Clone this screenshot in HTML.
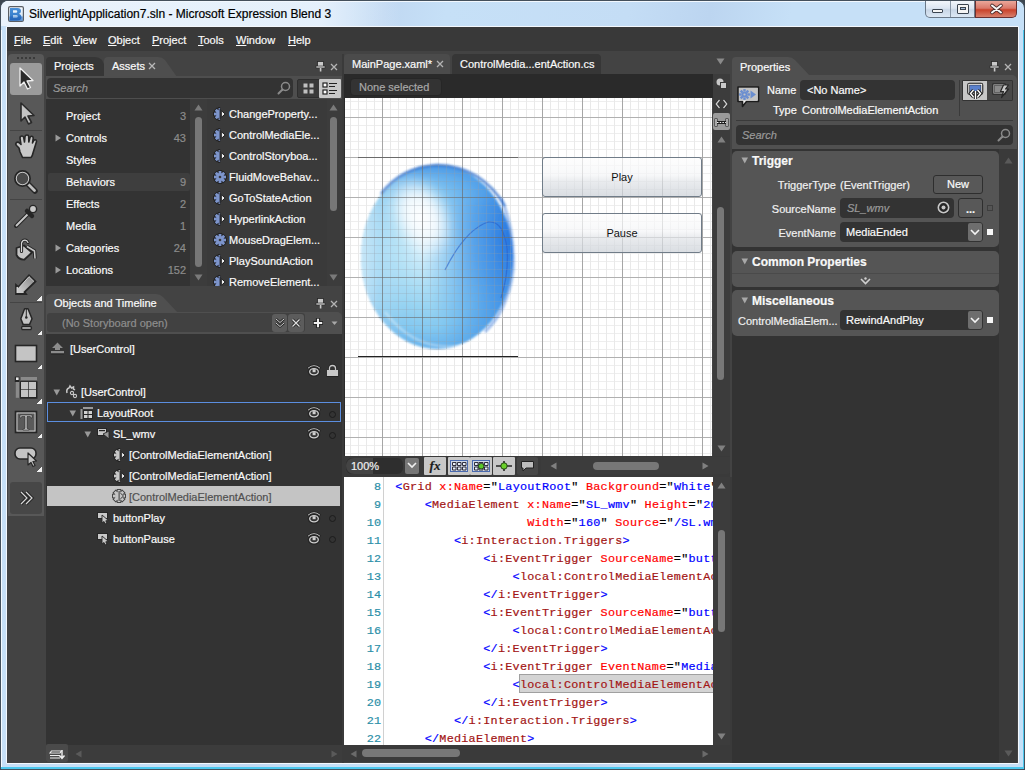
<!DOCTYPE html>
<html><head><meta charset="utf-8">
<style>
*{margin:0;padding:0;box-sizing:border-box}
html,body{width:1025px;height:770px;overflow:hidden;background:#3c4650}
body{position:relative;font-family:"Liberation Sans",sans-serif;font-size:11px;color:#f2f2f2}
.a{position:absolute}
.t{position:absolute;white-space:nowrap;line-height:14px;-webkit-text-stroke:0.2px currentColor}
svg.a{overflow:visible}
.code{position:absolute;white-space:pre;font-family:"Liberation Mono",monospace;font-size:11.8px;letter-spacing:0.25px;line-height:18px;color:#000;-webkit-text-stroke:0.2px}
.code b{font-weight:normal;color:#0000ff}
.code i{font-style:normal;color:#a31515}
.code u{text-decoration:none;color:#ff0000}
.code s{text-decoration:none;color:#0000ff}
</style></head><body>

<div class="a" style="left:0px;top:0px;width:1025px;height:770px;border-radius:8px 8px 2px 2px;background:linear-gradient(100deg,#c8e1f8 0px,#c4def6 300px,#c0d8f2 380px,#c6e0f7 440px,#c4ddf5 620px,#bcd5f0 700px,#c6e0f7 780px);border:1px solid #44505c"></div>
<div class="a" style="left:1px;top:1px;width:420px;height:25px;border-radius:7px 0 0 0;background:linear-gradient(90deg,rgba(236,244,252,0.95) 0px,rgba(232,242,252,0.9) 320px,rgba(232,242,252,0) 400px)"></div>
<div class="a" style="left:6px;top:1px;width:1013px;height:1px;background:#f2f8fe;border-radius:6px 6px 0 0"></div>
<div class="a" style="left:6px;top:26px;width:1013px;height:738px;border:1px solid #f4f8fd;border-radius:1px"></div>
<div class="a" style="left:1px;top:30px;width:1px;height:737px;background:#f4faff"></div>
<div class="a" style="left:1px;top:767px;width:1023px;height:2px;background:#4cc8ee"></div>
<div class="a" style="left:1023px;top:30px;width:1px;height:738px;background:#4cc8ee"></div>
<div class="a" style="left:7px;top:27px;width:1011px;height:736px;background:#434343"></div>
<div class="a" style="left:7px;top:27px;width:1011px;height:24px;background:#393939"></div>
<svg class="a" style="left:8px;top:6px;" width="16" height="16" viewBox="0 0 16 16"><defs><linearGradient id="ig" x1="0" y1="0" x2="0" y2="1"><stop offset="0" stop-color="#f8fbfe"/><stop offset="0.55" stop-color="#dcebf8"/><stop offset="1" stop-color="#9cc8ee"/></linearGradient>
<linearGradient id="ig2" x1="0" y1="0" x2="0" y2="1"><stop offset="0" stop-color="#4a90d8"/><stop offset="0.6" stop-color="#3a80cc"/><stop offset="1" stop-color="#1c5cb0"/></linearGradient></defs>
<rect x="0.6" y="0.6" width="14.8" height="14.8" rx="1.5" fill="url(#ig)" stroke="#5a5e64" stroke-width="1.2"/>
<path d="M2 2 H9.5 Q13 2 13 5 Q13 7.2 11 7.8 Q13.5 8.5 13.5 11 Q13.5 14.5 9 14.5 H2 Z M5 4.3 V6.8 H8 Q9.3 6.8 9.3 5.5 Q9.3 4.3 8 4.3 Z M5 9.2 V12 H8.3 Q9.8 12 9.8 10.6 Q9.8 9.2 8.3 9.2 Z" fill="url(#ig2)" fill-rule="evenodd"/>
<rect x="1.2" y="10.5" width="13.6" height="4.3" fill="#2a6cc0" opacity="0.55"/></svg>
<div class="t" style="left:29px;top:7px;font-size:12px;color:#000">SilverlightApplication7.sln - Microsoft Expression Blend 3</div>
<div class="a" style="left:925px;top:1px;width:50px;height:17px;border:1px solid #6a7888;border-top:none;border-radius:0 0 0 5px;background:linear-gradient(#f2f6fb,#dce6f2 45%,#c8d6e6 55%,#dce8f4)"></div>
<div class="a" style="left:950px;top:1px;width:1px;height:16px;background:#8a98a8"></div>
<div class="a" style="left:975px;top:1px;width:42px;height:17px;border:1px solid #6a3030;border-top:none;border-radius:0 0 5px 0;background:linear-gradient(#eaa79a,#d9796a 45%,#c9432b 55%,#d8806c)"></div>
<div class="a" style="left:932px;top:9px;width:11px;height:4px;background:#f4f4f4;border:1px solid #3a4450;border-radius:1px"></div>
<div class="a" style="left:957px;top:4px;width:12px;height:10px;background:#f4f4f4;border:1px solid #3a4450;border-radius:1px"></div>
<div class="a" style="left:960px;top:7px;width:6px;height:3px;background:#a8c0dc;border:1px solid #3a4450"></div>
<svg class="a" style="left:990px;top:4px;" width="13" height="10" viewBox="0 0 13 10"><path d="M2 1.5 L11 8.5 M11 1.5 L2 8.5" stroke="#4a2a2a" stroke-width="3.6" stroke-linecap="round"/><path d="M2 1.5 L11 8.5 M11 1.5 L2 8.5" stroke="#f8f8f8" stroke-width="2" stroke-linecap="round"/></svg>
<div class="t" style="left:14px;top:33px;font-size:11px;color:#fafafa"><span style="text-decoration:underline">F</span>ile</div>
<div class="t" style="left:43px;top:33px;font-size:11px;color:#fafafa"><span style="text-decoration:underline">E</span>dit</div>
<div class="t" style="left:73px;top:33px;font-size:11px;color:#fafafa"><span style="text-decoration:underline">V</span>iew</div>
<div class="t" style="left:108px;top:33px;font-size:11px;color:#fafafa"><span style="text-decoration:underline">O</span>bject</div>
<div class="t" style="left:152px;top:33px;font-size:11px;color:#fafafa"><span style="text-decoration:underline">P</span>roject</div>
<div class="t" style="left:198px;top:33px;font-size:11px;color:#fafafa"><span style="text-decoration:underline">T</span>ools</div>
<div class="t" style="left:236px;top:33px;font-size:11px;color:#fafafa"><span style="text-decoration:underline">W</span>indow</div>
<div class="t" style="left:288px;top:33px;font-size:11px;color:#fafafa"><span style="text-decoration:underline">H</span>elp</div>
<div class="a" style="left:8px;top:54px;width:36px;height:462px;background:#585858;border-radius:4px 4px 0 0"></div>
<div class="a" style="left:17px;top:57px;width:2px;height:2px;background:#3a3a3a"></div>
<div class="a" style="left:21px;top:57px;width:2px;height:2px;background:#3a3a3a"></div>
<div class="a" style="left:25px;top:57px;width:2px;height:2px;background:#3a3a3a"></div>
<div class="a" style="left:29px;top:57px;width:2px;height:2px;background:#3a3a3a"></div>
<div class="a" style="left:33px;top:57px;width:2px;height:2px;background:#3a3a3a"></div>
<div class="a" style="left:10px;top:63px;width:32px;height:32px;background:#9b9b9b;border-radius:3px"></div>
<div class="a" style="left:10px;top:130px;width:32px;height:1px;background:#444"></div>
<div class="a" style="left:10px;top:199px;width:32px;height:1px;background:#444"></div>
<div class="a" style="left:10px;top:302px;width:32px;height:1px;background:#444"></div>
<svg class="a" style="left:10px;top:63px;" width="32" height="32" viewBox="0 0 32 32"><path d="M10 5 L10 23 L14 19 L17.5 26 L20.5 24.5 L17 18 L23 17.5 Z" fill="#2a2a2a" stroke="#f0f0f0" stroke-width="1.3" stroke-linejoin="round"/><path d="M11 26 l3 0" stroke="none"/></svg>
<svg class="a" style="left:10px;top:97px;" width="32" height="32" viewBox="0 0 32 32"><path d="M11 6 L11 24 L15 20 L18.5 27 L21.5 25.5 L18 19 L24 18.5 Z" fill="#c4c4c4" stroke="#2a2a2a" stroke-width="1.6" stroke-linejoin="round"/></svg>
<svg class="a" style="left:10px;top:133px;" width="32" height="30" viewBox="0 0 32 30"><path d="M9 15 L6.5 12.5 Q5 11 6.5 9.5 Q8 8.5 9.5 10 L11 11.5 L10 5 Q10 3 12 3 Q13.5 3 13.8 5 L14.5 9 L15 3.5 Q15.3 2 17 2 Q18.7 2 18.7 3.5 L18.8 9 L20 4.5 Q20.5 3 22 3.3 Q23.5 3.8 23.2 5.5 L22.5 10 L23.8 7.5 Q24.8 6.3 26 7 Q27 7.8 26.3 9.3 L23 20 Q22.5 23 21 24.5 L12.5 24.5 Q11.5 22 10 19 Z" fill="#c8c8c8" stroke="#262626" stroke-width="1.6" stroke-linejoin="round"/></svg>
<svg class="a" style="left:10px;top:167px;" width="32" height="30" viewBox="0 0 32 30"><path d="M18 17 L25 24" stroke="#262626" stroke-width="5.5" stroke-linecap="round"/><path d="M18.5 17.5 L24.5 23.5" stroke="#c0c0c0" stroke-width="2.8" stroke-linecap="round"/><circle cx="12.5" cy="11.5" r="7" fill="#4a4a4a" stroke="#262626" stroke-width="3"/><circle cx="12.5" cy="11.5" r="6.2" fill="none" stroke="#c8c8c8" stroke-width="1.1"/></svg>
<svg class="a" style="left:10px;top:203px;" width="32" height="28" viewBox="0 0 32 28"><path d="M6 23 L20 9" stroke="#262626" stroke-width="4" stroke-linecap="round"/><path d="M6.5 22.5 L19.5 9.5" stroke="#c8c8c8" stroke-width="1.8" stroke-linecap="round"/><path d="M17 8 L22 13" stroke="#262626" stroke-width="4.5" stroke-linecap="round"/><circle cx="23" cy="6" r="3.6" fill="#c8c8c8" stroke="#262626" stroke-width="1.4"/></svg>
<svg class="a" style="left:10px;top:237px;" width="32" height="28" viewBox="0 0 32 28"><path d="M6.5 11 L14 8.5 L22 15.5 L14.5 22.5 Q9 23 6.5 18 Z" fill="#c4c4c4" stroke="#262626" stroke-width="1.8" stroke-linejoin="round"/><path d="M11.5 14.5 L11.5 6 Q12.5 3 15 3 Q17 3 18 5.5" fill="none" stroke="#262626" stroke-width="3.2" stroke-linecap="round"/><path d="M11.5 14.5 L11.5 6 Q12.5 3.2 15 3.2 Q17 3.2 18 5.5" fill="none" stroke="#d8d8d8" stroke-width="1.2" stroke-linecap="round"/><path d="M17 9.5 L24.5 14 L25 21.5" fill="none" stroke="#262626" stroke-width="3.4" stroke-linejoin="round"/><path d="M17 9.5 L24.5 14 L25 21.5" fill="none" stroke="#c8c8c8" stroke-width="1.5" stroke-linejoin="round"/></svg>
<svg class="a" style="left:10px;top:268px;" width="32" height="30" viewBox="0 0 32 30"><defs><linearGradient id="pg" x1="0" y1="1" x2="1" y2="0"><stop offset="0.2" stop-color="#c8c8c8"/><stop offset="1" stop-color="#808080"/></linearGradient></defs><path d="M6 26 L6 17 L8.3 19 L19 7.2 L25.5 13.5 L14.5 24 L16 26 Z" fill="url(#pg)" stroke="#262626" stroke-width="1.8" stroke-linejoin="miter"/><path d="M7 25 L7 19 L8.5 20.3 L19 8.6 L24 13.5" fill="none" stroke="#e0e0e0" stroke-width="0.8"/></svg>
<div class="a" style="left:37px;top:296px;width:5px;height:5px;background:linear-gradient(135deg,transparent 50%,#f0f0f0 50%)"></div>
<svg class="a" style="left:10px;top:303px;" width="32" height="30" viewBox="0 0 32 30"><path d="M14.6 5.8 L18 5.8 L22 15.8 L19.5 21.6 L13.2 21.6 L10.8 15.8 Z" fill="#c4c4c4" stroke="#262626" stroke-width="1.5" stroke-linejoin="round"/><path d="M16.3 6 V14" stroke="#262626" stroke-width="1"/><circle cx="16.3" cy="14.5" r="1.3" fill="#262626"/><path d="M12.2 23.5 H20.8 L21.5 25 L20.8 26.5 H12.2 L11.5 25 Z" fill="#c4c4c4" stroke="#262626" stroke-width="1.3"/></svg>
<div class="a" style="left:37px;top:330px;width:5px;height:5px;background:linear-gradient(135deg,transparent 50%,#f0f0f0 50%)"></div>
<svg class="a" style="left:10px;top:340px;" width="32" height="28" viewBox="0 0 32 28"><rect x="5.5" y="5.5" width="21" height="16" fill="#c4c4c4" stroke="#262626" stroke-width="1.6"/></svg>
<div class="a" style="left:37px;top:364px;width:5px;height:5px;background:linear-gradient(135deg,transparent 50%,#f0f0f0 50%)"></div>
<svg class="a" style="left:10px;top:372px;" width="32" height="30" viewBox="0 0 32 30"><rect x="5.8" y="10" width="3.2" height="15.8" fill="#8a8a8a"/><rect x="10.8" y="5" width="16.2" height="3.1" fill="#8a8a8a"/><rect x="4.8" y="4.6" width="4.6" height="5.4" fill="#262626"/><rect x="6" y="5.4" width="2.6" height="2.6" fill="#e8e8e8"/><rect x="10" y="9.2" width="17.5" height="17.5" fill="#262626"/><rect x="11" y="10" width="7.3" height="7.3" fill="#c4c4c4"/><rect x="19" y="10" width="7" height="7.3" fill="#c4c4c4"/><rect x="11" y="17.9" width="7.3" height="7.1" fill="#c4c4c4"/><rect x="19" y="17.9" width="7" height="7.1" fill="#c4c4c4"/></svg>
<div class="a" style="left:37px;top:399px;width:5px;height:5px;background:linear-gradient(135deg,transparent 50%,#f0f0f0 50%)"></div>
<svg class="a" style="left:10px;top:406px;" width="32" height="30" viewBox="0 0 32 30"><rect x="5.5" y="5.5" width="21" height="21" fill="#5a5a5a" stroke="#262626" stroke-width="1.6"/><rect x="7" y="7" width="18" height="18" fill="none" stroke="#c8c8c8" stroke-width="1"/><path d="M10 9 L22 9 L22 12 L21 12 L20.3 10.5 L17 10.5 L17 22.5 L19 23 L19 24 L13 24 L13 23 L15 22.5 L15 10.5 L11.7 10.5 L11 12 L10 12 Z" fill="#c8c8c8" stroke="#262626" stroke-width="0.6"/></svg>
<div class="a" style="left:37px;top:433px;width:5px;height:5px;background:linear-gradient(135deg,transparent 50%,#f0f0f0 50%)"></div>
<svg class="a" style="left:10px;top:443px;" width="32" height="30" viewBox="0 0 32 30"><rect x="5" y="5" width="21" height="11" rx="5" fill="#c4c4c4" stroke="#262626" stroke-width="1.6"/><path d="M18 10 L18 22 L21 19.5 L23 23.5 L25 22.5 L23 18.5 L26.5 18 Z" fill="#c4c4c4" stroke="#262626" stroke-width="1.2" stroke-linejoin="round"/></svg>
<div class="a" style="left:37px;top:467px;width:5px;height:5px;background:linear-gradient(135deg,transparent 50%,#f0f0f0 50%)"></div>
<div class="a" style="left:10px;top:482px;width:32px;height:32px;background:#474747;border-radius:3px"></div>
<svg class="a" style="left:10px;top:482px;" width="32" height="32" viewBox="0 0 32 32"><path d="M11 10 L17 16 L11 22 M16 10 L22 16 L16 22" fill="none" stroke="#262626" stroke-width="3.2"/><path d="M11 10 L17 16 L11 22 M16 10 L22 16 L16 22" fill="none" stroke="#d8d8d8" stroke-width="1.2"/></svg>
<svg class="a" style="left:46px;top:57px;" width="140" height="20" viewBox="0 0 140 20"><path d="M0 20 L0 4 Q0 0 4 0 L49 0 Q53 0 56 3 L64 20 Z" fill="#363636"/><path d="M58 20 L58 4 Q58 0 62 0 L112 0 Q116 0 119 3 L131 20 Z" fill="#4e4e4e"/></svg>
<div class="t" style="left:54px;top:59px;font-size:11px;color:#fafafa">Projects</div>
<div class="t" style="left:112px;top:59px;font-size:11px;color:#fafafa">Assets</div>
<svg class="a" style="left:148px;top:62px;" width="8" height="8" viewBox="0 0 8 8"><path d="M1 1 L7 7 M7 1 L1 7" stroke="#b8b8b8" stroke-width="1.3"/></svg>
<svg class="a" style="left:316px;top:61px;" width="10" height="11" viewBox="0 0 10 11"><rect x="1.5" y="0.5" width="6" height="5" fill="#c8c8c8" stroke="#262626" stroke-width="0.8"/><rect x="0" y="5" width="9" height="2" fill="#c8c8c8" stroke="#262626" stroke-width="0.6"/><rect x="3.8" y="7" width="1.6" height="3.5" fill="#c8c8c8"/></svg>
<svg class="a" style="left:330px;top:63px;" width="8" height="8" viewBox="0 0 8 8"><path d="M1 1 L7 7 M7 1 L1 7" stroke="#b4b4b4" stroke-width="1.3"/></svg>
<div class="a" style="left:46px;top:76px;width:296px;height:210px;background:#4e4e4e"></div>
<div class="a" style="left:47px;top:78px;width:246px;height:20px;background:#333;border-radius:4px"></div>
<div class="t" style="left:53px;top:81px;font-size:11px;font-style:italic;color:#9a9a9a">Search</div>
<svg class="a" style="left:277px;top:81px;" width="14" height="14" viewBox="0 0 14 14"><circle cx="8.5" cy="5.5" r="4" fill="none" stroke="#8a8a8a" stroke-width="1.5"/><path d="M5.5 8.5 L1.5 12.5" stroke="#8a8a8a" stroke-width="2" stroke-linecap="round"/></svg>
<div class="a" style="left:297px;top:79px;width:44px;height:19px;background:#3a3a3a;border:1px solid #2e2e2e;border-radius:2px"></div>
<div class="a" style="left:319px;top:79px;width:22px;height:19px;background:#c8c8c8;border-radius:1px"></div>
<svg class="a" style="left:303px;top:83px;" width="12" height="12" viewBox="0 0 12 12"><rect x="0.5" y="0.5" width="4" height="4" fill="#c0c0c0"/><rect x="6.5" y="0.5" width="4" height="4" fill="#c0c0c0"/><rect x="0.5" y="6.5" width="4" height="4" fill="#c0c0c0"/><rect x="6.5" y="6.5" width="4" height="4" fill="#c0c0c0"/></svg>
<svg class="a" style="left:322px;top:82px;" width="18" height="14" viewBox="0 0 18 14"><rect x="1" y="1" width="4" height="4" fill="#fff" stroke="#222" stroke-width="1.2"/><rect x="1" y="8" width="4" height="4" fill="#fff" stroke="#222" stroke-width="1.2"/><path d="M7 1.5 H15 M7 4.5 H13 M7 8.5 H15 M7 11.5 H13" stroke="#222" stroke-width="1.2"/></svg>
<div class="a" style="left:46px;top:99px;width:144px;height:187px;background:#333"></div>
<div class="a" style="left:48px;top:173px;width:142px;height:18px;background:#3e3e3e;border-radius:2px"></div>
<div class="t" style="left:66px;top:109px;font-size:11px;color:#fafafa">Project</div>
<div class="t" style="right:839px;top:109px;font-size:11px;color:#8c8c8c">3</div>
<svg class="a" style="left:55px;top:134px;" width="7" height="8" viewBox="0 0 7 8"><path d="M0.5 0.5 L6 4 L0.5 7.5 Z" fill="#9a9a9a"/></svg>
<div class="t" style="left:66px;top:131px;font-size:11px;color:#fafafa">Controls</div>
<div class="t" style="right:839px;top:131px;font-size:11px;color:#8c8c8c">43</div>
<div class="t" style="left:66px;top:153px;font-size:11px;color:#fafafa">Styles</div>
<div class="t" style="left:66px;top:175px;font-size:11px;color:#fafafa">Behaviors</div>
<div class="t" style="right:839px;top:175px;font-size:11px;color:#8c8c8c">9</div>
<div class="t" style="left:66px;top:197px;font-size:11px;color:#fafafa">Effects</div>
<div class="t" style="right:839px;top:197px;font-size:11px;color:#8c8c8c">2</div>
<div class="t" style="left:66px;top:219px;font-size:11px;color:#fafafa">Media</div>
<div class="t" style="right:839px;top:219px;font-size:11px;color:#8c8c8c">1</div>
<svg class="a" style="left:55px;top:244px;" width="7" height="8" viewBox="0 0 7 8"><path d="M0.5 0.5 L6 4 L0.5 7.5 Z" fill="#9a9a9a"/></svg>
<div class="t" style="left:66px;top:241px;font-size:11px;color:#fafafa">Categories</div>
<div class="t" style="right:839px;top:241px;font-size:11px;color:#8c8c8c">24</div>
<svg class="a" style="left:55px;top:266px;" width="7" height="8" viewBox="0 0 7 8"><path d="M0.5 0.5 L6 4 L0.5 7.5 Z" fill="#9a9a9a"/></svg>
<div class="t" style="left:66px;top:263px;font-size:11px;color:#fafafa">Locations</div>
<div class="t" style="right:839px;top:263px;font-size:11px;color:#8c8c8c">152</div>
<div class="a" style="left:190px;top:99px;width:17px;height:187px;background:#3c3c3c"></div>
<svg class="a" style="left:194px;top:104px;" width="9" height="7" viewBox="0 0 9 7"><path d="M0.5 6.5 L4.5 0.5 L8.5 6.5 Z" fill="#7a7a7a"/></svg>
<svg class="a" style="left:194px;top:274px;" width="9" height="7" viewBox="0 0 9 7"><path d="M0.5 0.5 L4.5 6.5 L8.5 0.5 Z" fill="#7a7a7a"/></svg>
<div class="a" style="left:195px;top:117px;width:7px;height:150px;background:#777;border-radius:4px"></div>
<div class="a" style="left:207px;top:99px;width:120px;height:187px;background:#3a3a3a"></div>
<div class="a" style="left:327px;top:99px;width:15px;height:187px;background:#3c3c3c"></div>
<svg class="a" style="left:329px;top:104px;" width="9" height="7" viewBox="0 0 9 7"><path d="M0.5 6.5 L4.5 0.5 L8.5 6.5 Z" fill="#7a7a7a"/></svg>
<svg class="a" style="left:329px;top:274px;" width="9" height="7" viewBox="0 0 9 7"><path d="M0.5 0.5 L4.5 6.5 L8.5 0.5 Z" fill="#7a7a7a"/></svg>
<div class="a" style="left:330px;top:117px;width:7px;height:94px;background:#777;border-radius:4px"></div>
<div class="a" style="left:207px;top:99px;width:120px;height:187px;overflow:hidden">
<svg class="a" style="left:6px;top:8px" width="14" height="14"><defs><clipPath id="hg"><rect x="0" y="0" width="7.2" height="14"/></clipPath></defs><g clip-path="url(#hg)"><g fill="#1e1e1e" stroke="#1e1e1e" stroke-width="1.6"><circle cx="7" cy="7" r="3.9"/><rect x="10.20" y="5.60" width="2.8" height="2.8" transform="rotate(0 11.60 7.00)"/><rect x="8.85" y="8.85" width="2.8" height="2.8" transform="rotate(45 10.25 10.25)"/><rect x="5.60" y="10.20" width="2.8" height="2.8" transform="rotate(90 7.00 11.60)"/><rect x="2.35" y="8.85" width="2.8" height="2.8" transform="rotate(135 3.75 10.25)"/><rect x="1.00" y="5.60" width="2.8" height="2.8" transform="rotate(180 2.40 7.00)"/><rect x="2.35" y="2.35" width="2.8" height="2.8" transform="rotate(225 3.75 3.75)"/><rect x="5.60" y="1.00" width="2.8" height="2.8" transform="rotate(270 7.00 2.40)"/><rect x="8.85" y="2.35" width="2.8" height="2.8" transform="rotate(315 10.25 3.75)"/></g><g fill="#7d95cc"><circle cx="7" cy="7" r="3.9"/><rect x="10.20" y="5.60" width="2.8" height="2.8" transform="rotate(0 11.60 7.00)"/><rect x="8.85" y="8.85" width="2.8" height="2.8" transform="rotate(45 10.25 10.25)"/><rect x="5.60" y="10.20" width="2.8" height="2.8" transform="rotate(90 7.00 11.60)"/><rect x="2.35" y="8.85" width="2.8" height="2.8" transform="rotate(135 3.75 10.25)"/><rect x="1.00" y="5.60" width="2.8" height="2.8" transform="rotate(180 2.40 7.00)"/><rect x="2.35" y="2.35" width="2.8" height="2.8" transform="rotate(225 3.75 3.75)"/><rect x="5.60" y="1.00" width="2.8" height="2.8" transform="rotate(270 7.00 2.40)"/><rect x="8.85" y="2.35" width="2.8" height="2.8" transform="rotate(315 10.25 3.75)"/></g></g><rect x="6.6" y="1.5" width="1" height="11" fill="#1e1e1e"/><path d="M8.3 3.6 L12.2 7 L8.3 10.4 Z" fill="#f4f4f4" stroke="#1e1e1e" stroke-width="1"/></svg>
<div class="t" style="left:22px;top:8px;font-size:11px;color:#fafafa">ChangeProperty...</div>
<svg class="a" style="left:6px;top:29px" width="14" height="14"><defs><clipPath id="hg"><rect x="0" y="0" width="7.2" height="14"/></clipPath></defs><g clip-path="url(#hg)"><g fill="#1e1e1e" stroke="#1e1e1e" stroke-width="1.6"><circle cx="7" cy="7" r="3.9"/><rect x="10.20" y="5.60" width="2.8" height="2.8" transform="rotate(0 11.60 7.00)"/><rect x="8.85" y="8.85" width="2.8" height="2.8" transform="rotate(45 10.25 10.25)"/><rect x="5.60" y="10.20" width="2.8" height="2.8" transform="rotate(90 7.00 11.60)"/><rect x="2.35" y="8.85" width="2.8" height="2.8" transform="rotate(135 3.75 10.25)"/><rect x="1.00" y="5.60" width="2.8" height="2.8" transform="rotate(180 2.40 7.00)"/><rect x="2.35" y="2.35" width="2.8" height="2.8" transform="rotate(225 3.75 3.75)"/><rect x="5.60" y="1.00" width="2.8" height="2.8" transform="rotate(270 7.00 2.40)"/><rect x="8.85" y="2.35" width="2.8" height="2.8" transform="rotate(315 10.25 3.75)"/></g><g fill="#7d95cc"><circle cx="7" cy="7" r="3.9"/><rect x="10.20" y="5.60" width="2.8" height="2.8" transform="rotate(0 11.60 7.00)"/><rect x="8.85" y="8.85" width="2.8" height="2.8" transform="rotate(45 10.25 10.25)"/><rect x="5.60" y="10.20" width="2.8" height="2.8" transform="rotate(90 7.00 11.60)"/><rect x="2.35" y="8.85" width="2.8" height="2.8" transform="rotate(135 3.75 10.25)"/><rect x="1.00" y="5.60" width="2.8" height="2.8" transform="rotate(180 2.40 7.00)"/><rect x="2.35" y="2.35" width="2.8" height="2.8" transform="rotate(225 3.75 3.75)"/><rect x="5.60" y="1.00" width="2.8" height="2.8" transform="rotate(270 7.00 2.40)"/><rect x="8.85" y="2.35" width="2.8" height="2.8" transform="rotate(315 10.25 3.75)"/></g></g><rect x="6.6" y="1.5" width="1" height="11" fill="#1e1e1e"/><path d="M8.3 3.6 L12.2 7 L8.3 10.4 Z" fill="#f4f4f4" stroke="#1e1e1e" stroke-width="1"/></svg>
<div class="t" style="left:22px;top:29px;font-size:11px;color:#fafafa">ControlMediaEle...</div>
<svg class="a" style="left:6px;top:50px" width="14" height="14"><defs><clipPath id="hg"><rect x="0" y="0" width="7.2" height="14"/></clipPath></defs><g clip-path="url(#hg)"><g fill="#1e1e1e" stroke="#1e1e1e" stroke-width="1.6"><circle cx="7" cy="7" r="3.9"/><rect x="10.20" y="5.60" width="2.8" height="2.8" transform="rotate(0 11.60 7.00)"/><rect x="8.85" y="8.85" width="2.8" height="2.8" transform="rotate(45 10.25 10.25)"/><rect x="5.60" y="10.20" width="2.8" height="2.8" transform="rotate(90 7.00 11.60)"/><rect x="2.35" y="8.85" width="2.8" height="2.8" transform="rotate(135 3.75 10.25)"/><rect x="1.00" y="5.60" width="2.8" height="2.8" transform="rotate(180 2.40 7.00)"/><rect x="2.35" y="2.35" width="2.8" height="2.8" transform="rotate(225 3.75 3.75)"/><rect x="5.60" y="1.00" width="2.8" height="2.8" transform="rotate(270 7.00 2.40)"/><rect x="8.85" y="2.35" width="2.8" height="2.8" transform="rotate(315 10.25 3.75)"/></g><g fill="#7d95cc"><circle cx="7" cy="7" r="3.9"/><rect x="10.20" y="5.60" width="2.8" height="2.8" transform="rotate(0 11.60 7.00)"/><rect x="8.85" y="8.85" width="2.8" height="2.8" transform="rotate(45 10.25 10.25)"/><rect x="5.60" y="10.20" width="2.8" height="2.8" transform="rotate(90 7.00 11.60)"/><rect x="2.35" y="8.85" width="2.8" height="2.8" transform="rotate(135 3.75 10.25)"/><rect x="1.00" y="5.60" width="2.8" height="2.8" transform="rotate(180 2.40 7.00)"/><rect x="2.35" y="2.35" width="2.8" height="2.8" transform="rotate(225 3.75 3.75)"/><rect x="5.60" y="1.00" width="2.8" height="2.8" transform="rotate(270 7.00 2.40)"/><rect x="8.85" y="2.35" width="2.8" height="2.8" transform="rotate(315 10.25 3.75)"/></g></g><rect x="6.6" y="1.5" width="1" height="11" fill="#1e1e1e"/><path d="M8.3 3.6 L12.2 7 L8.3 10.4 Z" fill="#f4f4f4" stroke="#1e1e1e" stroke-width="1"/></svg>
<div class="t" style="left:22px;top:50px;font-size:11px;color:#fafafa">ControlStoryboa...</div>
<svg class="a" style="left:6px;top:71px" width="14" height="14"><g fill="#1e1e1e" stroke="#1e1e1e" stroke-width="1.6"><circle cx="7" cy="7" r="3.9"/><rect x="10.20" y="5.60" width="2.8" height="2.8" transform="rotate(0 11.60 7.00)"/><rect x="8.85" y="8.85" width="2.8" height="2.8" transform="rotate(45 10.25 10.25)"/><rect x="5.60" y="10.20" width="2.8" height="2.8" transform="rotate(90 7.00 11.60)"/><rect x="2.35" y="8.85" width="2.8" height="2.8" transform="rotate(135 3.75 10.25)"/><rect x="1.00" y="5.60" width="2.8" height="2.8" transform="rotate(180 2.40 7.00)"/><rect x="2.35" y="2.35" width="2.8" height="2.8" transform="rotate(225 3.75 3.75)"/><rect x="5.60" y="1.00" width="2.8" height="2.8" transform="rotate(270 7.00 2.40)"/><rect x="8.85" y="2.35" width="2.8" height="2.8" transform="rotate(315 10.25 3.75)"/></g><g fill="#7d95cc"><circle cx="7" cy="7" r="3.9"/><rect x="10.20" y="5.60" width="2.8" height="2.8" transform="rotate(0 11.60 7.00)"/><rect x="8.85" y="8.85" width="2.8" height="2.8" transform="rotate(45 10.25 10.25)"/><rect x="5.60" y="10.20" width="2.8" height="2.8" transform="rotate(90 7.00 11.60)"/><rect x="2.35" y="8.85" width="2.8" height="2.8" transform="rotate(135 3.75 10.25)"/><rect x="1.00" y="5.60" width="2.8" height="2.8" transform="rotate(180 2.40 7.00)"/><rect x="2.35" y="2.35" width="2.8" height="2.8" transform="rotate(225 3.75 3.75)"/><rect x="5.60" y="1.00" width="2.8" height="2.8" transform="rotate(270 7.00 2.40)"/><rect x="8.85" y="2.35" width="2.8" height="2.8" transform="rotate(315 10.25 3.75)"/></g><circle cx="7" cy="7" r="1.3" fill="#3a3a3a"/></svg>
<div class="t" style="left:22px;top:71px;font-size:11px;color:#fafafa">FluidMoveBehav...</div>
<svg class="a" style="left:6px;top:92px" width="14" height="14"><defs><clipPath id="hg"><rect x="0" y="0" width="7.2" height="14"/></clipPath></defs><g clip-path="url(#hg)"><g fill="#1e1e1e" stroke="#1e1e1e" stroke-width="1.6"><circle cx="7" cy="7" r="3.9"/><rect x="10.20" y="5.60" width="2.8" height="2.8" transform="rotate(0 11.60 7.00)"/><rect x="8.85" y="8.85" width="2.8" height="2.8" transform="rotate(45 10.25 10.25)"/><rect x="5.60" y="10.20" width="2.8" height="2.8" transform="rotate(90 7.00 11.60)"/><rect x="2.35" y="8.85" width="2.8" height="2.8" transform="rotate(135 3.75 10.25)"/><rect x="1.00" y="5.60" width="2.8" height="2.8" transform="rotate(180 2.40 7.00)"/><rect x="2.35" y="2.35" width="2.8" height="2.8" transform="rotate(225 3.75 3.75)"/><rect x="5.60" y="1.00" width="2.8" height="2.8" transform="rotate(270 7.00 2.40)"/><rect x="8.85" y="2.35" width="2.8" height="2.8" transform="rotate(315 10.25 3.75)"/></g><g fill="#7d95cc"><circle cx="7" cy="7" r="3.9"/><rect x="10.20" y="5.60" width="2.8" height="2.8" transform="rotate(0 11.60 7.00)"/><rect x="8.85" y="8.85" width="2.8" height="2.8" transform="rotate(45 10.25 10.25)"/><rect x="5.60" y="10.20" width="2.8" height="2.8" transform="rotate(90 7.00 11.60)"/><rect x="2.35" y="8.85" width="2.8" height="2.8" transform="rotate(135 3.75 10.25)"/><rect x="1.00" y="5.60" width="2.8" height="2.8" transform="rotate(180 2.40 7.00)"/><rect x="2.35" y="2.35" width="2.8" height="2.8" transform="rotate(225 3.75 3.75)"/><rect x="5.60" y="1.00" width="2.8" height="2.8" transform="rotate(270 7.00 2.40)"/><rect x="8.85" y="2.35" width="2.8" height="2.8" transform="rotate(315 10.25 3.75)"/></g></g><rect x="6.6" y="1.5" width="1" height="11" fill="#1e1e1e"/><path d="M8.3 3.6 L12.2 7 L8.3 10.4 Z" fill="#f4f4f4" stroke="#1e1e1e" stroke-width="1"/></svg>
<div class="t" style="left:22px;top:92px;font-size:11px;color:#fafafa">GoToStateAction</div>
<svg class="a" style="left:6px;top:113px" width="14" height="14"><defs><clipPath id="hg"><rect x="0" y="0" width="7.2" height="14"/></clipPath></defs><g clip-path="url(#hg)"><g fill="#1e1e1e" stroke="#1e1e1e" stroke-width="1.6"><circle cx="7" cy="7" r="3.9"/><rect x="10.20" y="5.60" width="2.8" height="2.8" transform="rotate(0 11.60 7.00)"/><rect x="8.85" y="8.85" width="2.8" height="2.8" transform="rotate(45 10.25 10.25)"/><rect x="5.60" y="10.20" width="2.8" height="2.8" transform="rotate(90 7.00 11.60)"/><rect x="2.35" y="8.85" width="2.8" height="2.8" transform="rotate(135 3.75 10.25)"/><rect x="1.00" y="5.60" width="2.8" height="2.8" transform="rotate(180 2.40 7.00)"/><rect x="2.35" y="2.35" width="2.8" height="2.8" transform="rotate(225 3.75 3.75)"/><rect x="5.60" y="1.00" width="2.8" height="2.8" transform="rotate(270 7.00 2.40)"/><rect x="8.85" y="2.35" width="2.8" height="2.8" transform="rotate(315 10.25 3.75)"/></g><g fill="#7d95cc"><circle cx="7" cy="7" r="3.9"/><rect x="10.20" y="5.60" width="2.8" height="2.8" transform="rotate(0 11.60 7.00)"/><rect x="8.85" y="8.85" width="2.8" height="2.8" transform="rotate(45 10.25 10.25)"/><rect x="5.60" y="10.20" width="2.8" height="2.8" transform="rotate(90 7.00 11.60)"/><rect x="2.35" y="8.85" width="2.8" height="2.8" transform="rotate(135 3.75 10.25)"/><rect x="1.00" y="5.60" width="2.8" height="2.8" transform="rotate(180 2.40 7.00)"/><rect x="2.35" y="2.35" width="2.8" height="2.8" transform="rotate(225 3.75 3.75)"/><rect x="5.60" y="1.00" width="2.8" height="2.8" transform="rotate(270 7.00 2.40)"/><rect x="8.85" y="2.35" width="2.8" height="2.8" transform="rotate(315 10.25 3.75)"/></g></g><rect x="6.6" y="1.5" width="1" height="11" fill="#1e1e1e"/><path d="M8.3 3.6 L12.2 7 L8.3 10.4 Z" fill="#f4f4f4" stroke="#1e1e1e" stroke-width="1"/></svg>
<div class="t" style="left:22px;top:113px;font-size:11px;color:#fafafa">HyperlinkAction</div>
<svg class="a" style="left:6px;top:134px" width="14" height="14"><g fill="#1e1e1e" stroke="#1e1e1e" stroke-width="1.6"><circle cx="7" cy="7" r="3.9"/><rect x="10.20" y="5.60" width="2.8" height="2.8" transform="rotate(0 11.60 7.00)"/><rect x="8.85" y="8.85" width="2.8" height="2.8" transform="rotate(45 10.25 10.25)"/><rect x="5.60" y="10.20" width="2.8" height="2.8" transform="rotate(90 7.00 11.60)"/><rect x="2.35" y="8.85" width="2.8" height="2.8" transform="rotate(135 3.75 10.25)"/><rect x="1.00" y="5.60" width="2.8" height="2.8" transform="rotate(180 2.40 7.00)"/><rect x="2.35" y="2.35" width="2.8" height="2.8" transform="rotate(225 3.75 3.75)"/><rect x="5.60" y="1.00" width="2.8" height="2.8" transform="rotate(270 7.00 2.40)"/><rect x="8.85" y="2.35" width="2.8" height="2.8" transform="rotate(315 10.25 3.75)"/></g><g fill="#7d95cc"><circle cx="7" cy="7" r="3.9"/><rect x="10.20" y="5.60" width="2.8" height="2.8" transform="rotate(0 11.60 7.00)"/><rect x="8.85" y="8.85" width="2.8" height="2.8" transform="rotate(45 10.25 10.25)"/><rect x="5.60" y="10.20" width="2.8" height="2.8" transform="rotate(90 7.00 11.60)"/><rect x="2.35" y="8.85" width="2.8" height="2.8" transform="rotate(135 3.75 10.25)"/><rect x="1.00" y="5.60" width="2.8" height="2.8" transform="rotate(180 2.40 7.00)"/><rect x="2.35" y="2.35" width="2.8" height="2.8" transform="rotate(225 3.75 3.75)"/><rect x="5.60" y="1.00" width="2.8" height="2.8" transform="rotate(270 7.00 2.40)"/><rect x="8.85" y="2.35" width="2.8" height="2.8" transform="rotate(315 10.25 3.75)"/></g><circle cx="7" cy="7" r="1.3" fill="#3a3a3a"/></svg>
<div class="t" style="left:22px;top:134px;font-size:11px;color:#fafafa">MouseDragElem...</div>
<svg class="a" style="left:6px;top:155px" width="14" height="14"><defs><clipPath id="hg"><rect x="0" y="0" width="7.2" height="14"/></clipPath></defs><g clip-path="url(#hg)"><g fill="#1e1e1e" stroke="#1e1e1e" stroke-width="1.6"><circle cx="7" cy="7" r="3.9"/><rect x="10.20" y="5.60" width="2.8" height="2.8" transform="rotate(0 11.60 7.00)"/><rect x="8.85" y="8.85" width="2.8" height="2.8" transform="rotate(45 10.25 10.25)"/><rect x="5.60" y="10.20" width="2.8" height="2.8" transform="rotate(90 7.00 11.60)"/><rect x="2.35" y="8.85" width="2.8" height="2.8" transform="rotate(135 3.75 10.25)"/><rect x="1.00" y="5.60" width="2.8" height="2.8" transform="rotate(180 2.40 7.00)"/><rect x="2.35" y="2.35" width="2.8" height="2.8" transform="rotate(225 3.75 3.75)"/><rect x="5.60" y="1.00" width="2.8" height="2.8" transform="rotate(270 7.00 2.40)"/><rect x="8.85" y="2.35" width="2.8" height="2.8" transform="rotate(315 10.25 3.75)"/></g><g fill="#7d95cc"><circle cx="7" cy="7" r="3.9"/><rect x="10.20" y="5.60" width="2.8" height="2.8" transform="rotate(0 11.60 7.00)"/><rect x="8.85" y="8.85" width="2.8" height="2.8" transform="rotate(45 10.25 10.25)"/><rect x="5.60" y="10.20" width="2.8" height="2.8" transform="rotate(90 7.00 11.60)"/><rect x="2.35" y="8.85" width="2.8" height="2.8" transform="rotate(135 3.75 10.25)"/><rect x="1.00" y="5.60" width="2.8" height="2.8" transform="rotate(180 2.40 7.00)"/><rect x="2.35" y="2.35" width="2.8" height="2.8" transform="rotate(225 3.75 3.75)"/><rect x="5.60" y="1.00" width="2.8" height="2.8" transform="rotate(270 7.00 2.40)"/><rect x="8.85" y="2.35" width="2.8" height="2.8" transform="rotate(315 10.25 3.75)"/></g></g><rect x="6.6" y="1.5" width="1" height="11" fill="#1e1e1e"/><path d="M8.3 3.6 L12.2 7 L8.3 10.4 Z" fill="#f4f4f4" stroke="#1e1e1e" stroke-width="1"/></svg>
<div class="t" style="left:22px;top:155px;font-size:11px;color:#fafafa">PlaySoundAction</div>
<svg class="a" style="left:6px;top:176px" width="14" height="14"><defs><clipPath id="hg"><rect x="0" y="0" width="7.2" height="14"/></clipPath></defs><g clip-path="url(#hg)"><g fill="#1e1e1e" stroke="#1e1e1e" stroke-width="1.6"><circle cx="7" cy="7" r="3.9"/><rect x="10.20" y="5.60" width="2.8" height="2.8" transform="rotate(0 11.60 7.00)"/><rect x="8.85" y="8.85" width="2.8" height="2.8" transform="rotate(45 10.25 10.25)"/><rect x="5.60" y="10.20" width="2.8" height="2.8" transform="rotate(90 7.00 11.60)"/><rect x="2.35" y="8.85" width="2.8" height="2.8" transform="rotate(135 3.75 10.25)"/><rect x="1.00" y="5.60" width="2.8" height="2.8" transform="rotate(180 2.40 7.00)"/><rect x="2.35" y="2.35" width="2.8" height="2.8" transform="rotate(225 3.75 3.75)"/><rect x="5.60" y="1.00" width="2.8" height="2.8" transform="rotate(270 7.00 2.40)"/><rect x="8.85" y="2.35" width="2.8" height="2.8" transform="rotate(315 10.25 3.75)"/></g><g fill="#7d95cc"><circle cx="7" cy="7" r="3.9"/><rect x="10.20" y="5.60" width="2.8" height="2.8" transform="rotate(0 11.60 7.00)"/><rect x="8.85" y="8.85" width="2.8" height="2.8" transform="rotate(45 10.25 10.25)"/><rect x="5.60" y="10.20" width="2.8" height="2.8" transform="rotate(90 7.00 11.60)"/><rect x="2.35" y="8.85" width="2.8" height="2.8" transform="rotate(135 3.75 10.25)"/><rect x="1.00" y="5.60" width="2.8" height="2.8" transform="rotate(180 2.40 7.00)"/><rect x="2.35" y="2.35" width="2.8" height="2.8" transform="rotate(225 3.75 3.75)"/><rect x="5.60" y="1.00" width="2.8" height="2.8" transform="rotate(270 7.00 2.40)"/><rect x="8.85" y="2.35" width="2.8" height="2.8" transform="rotate(315 10.25 3.75)"/></g></g><rect x="6.6" y="1.5" width="1" height="11" fill="#1e1e1e"/><path d="M8.3 3.6 L12.2 7 L8.3 10.4 Z" fill="#f4f4f4" stroke="#1e1e1e" stroke-width="1"/></svg>
<div class="t" style="left:22px;top:176px;font-size:11px;color:#fafafa">RemoveElement...</div>
</div>
<svg class="a" style="left:46px;top:294px;" width="140" height="19" viewBox="0 0 140 19"><path d="M0 19 L0 4 Q0 0 4 0 L110 0 Q114 0 117 3 L132 19 Z" fill="#4f4f4f"/></svg>
<div class="t" style="left:54px;top:296px;font-size:11px;color:#fafafa">Objects and Timeline</div>
<svg class="a" style="left:316px;top:298px;" width="10" height="11" viewBox="0 0 10 11"><rect x="1.5" y="0.5" width="6" height="5" fill="#c8c8c8" stroke="#262626" stroke-width="0.8"/><rect x="0" y="5" width="9" height="2" fill="#c8c8c8" stroke="#262626" stroke-width="0.6"/><rect x="3.8" y="7" width="1.6" height="3.5" fill="#c8c8c8"/></svg>
<svg class="a" style="left:330px;top:300px;" width="8" height="8" viewBox="0 0 8 8"><path d="M1 1 L7 7 M7 1 L1 7" stroke="#b4b4b4" stroke-width="1.3"/></svg>
<div class="a" style="left:46px;top:312px;width:296px;height:22px;background:#4f4f4f;border-radius:0 5px 0 0"></div>
<div class="a" style="left:47px;top:313px;width:258px;height:19px;background:#414141;border-radius:3px"></div>
<div class="t" style="left:62px;top:316px;font-size:11px;color:#8e8e8e">(No Storyboard open)</div>
<div class="a" style="left:272px;top:314px;width:15px;height:18px;background:#5c5c5c;border-radius:3px"></div>
<div class="a" style="left:288px;top:314px;width:16px;height:18px;background:#5c5c5c;border-radius:3px"></div>
<svg class="a" style="left:275px;top:318px;" width="10" height="10" viewBox="0 0 10 10"><path d="M1 1 L5 4.5 L9 1 M1 5 L5 8.5 L9 5" fill="none" stroke="#262626" stroke-width="2.4"/><path d="M1 1 L5 4.5 L9 1 M1 5 L5 8.5 L9 5" fill="none" stroke="#d0d0d0" stroke-width="1"/></svg>
<svg class="a" style="left:291px;top:318px;" width="10" height="10" viewBox="0 0 10 10"><path d="M1.5 1.5 L8.5 8.5 M8.5 1.5 L1.5 8.5" stroke="#262626" stroke-width="3"/><path d="M1.5 1.5 L8.5 8.5 M8.5 1.5 L1.5 8.5" stroke="#e0e0e0" stroke-width="1.2"/></svg>
<svg class="a" style="left:312px;top:317px;" width="12" height="12" viewBox="0 0 12 12"><path d="M6 1 V11 M1 6 H11" stroke="#262626" stroke-width="4.2"/><path d="M6 1.8 V10.2 M1.8 6 H10.2" stroke="#f0f0f0" stroke-width="2"/></svg>
<svg class="a" style="left:331px;top:321px;" width="7" height="5" viewBox="0 0 7 5"><path d="M0.5 0.5 L3.5 4 L6.5 0.5 Z" fill="#a8a8a8"/></svg>
<div class="a" style="left:46px;top:334px;width:296px;height:411px;background:#333"></div>
<div class="a" style="left:342px;top:54px;width:2px;height:709px;background:#3a3a3a"></div>
<div class="a" style="left:46px;top:745px;width:296px;height:17px;background:#3c3c3c"></div>
<div class="a" style="left:46px;top:744px;width:22px;height:18px;background:#4a4a4a;border-radius:2px"></div>
<svg class="a" style="left:49px;top:747px;" width="16" height="13" viewBox="0 0 16 13"><path d="M1 6 h10 l1.5 -2 h-10z M1 8.5 h10 M1 11 h10" stroke="#f0f0f0" stroke-width="1.1" fill="#262626"/><path d="M13 3 V11 M10.5 8.5 L13 11.5 L15.5 8.5" stroke="#f0f0f0" stroke-width="1.4" fill="none"/></svg>
<svg class="a" style="left:75px;top:750px;" width="7" height="8" viewBox="0 0 7 8"><path d="M6.5 0.5 L0.5 4 L6.5 7.5 Z" fill="#5a5a5a"/></svg>
<svg class="a" style="left:331px;top:750px;" width="7" height="8" viewBox="0 0 7 8"><path d="M0.5 0.5 L6.5 4 L0.5 7.5 Z" fill="#5a5a5a"/></svg>
<svg class="a" style="left:50px;top:342px;" width="15" height="12" viewBox="0 0 15 12"><path d="M7.5 0.5 L13 6 L10 6 L10 8 L5 8 L5 6 L2 6 Z" fill="#8c8c8c"/><rect x="1" y="9" width="13" height="2.5" fill="#8c8c8c"/><rect x="1" y="11.5" width="13" height="1" fill="#222"/></svg>
<div class="t" style="left:70px;top:342px;font-size:11px;color:#fafafa">[UserControl]</div>
<svg class="a" style="left:306px;top:364px;" width="16" height="13" viewBox="0 0 16 13"><path d="M1.5 4.5 Q8 -1.5 14.5 4.5" fill="none" stroke="#262626" stroke-width="2.2"/><path d="M2 4.2 Q8 -0.8 14 4.2" fill="none" stroke="#c0c0c0" stroke-width="1"/><ellipse cx="8" cy="7.7" rx="5" ry="3.8" fill="none" stroke="#262626" stroke-width="2.6"/><ellipse cx="8" cy="7.7" rx="4.3" ry="3.1" fill="none" stroke="#d0d0d0" stroke-width="1.3"/><rect x="6.6" y="5.2" width="3" height="3" fill="#d0d0d0"/></svg>
<svg class="a" style="left:326px;top:364px;" width="13" height="13" viewBox="0 0 13 13"><path d="M3.5 6 V4.5 Q3.5 1 6.5 1 Q9.5 1 9.5 4.5 V6" fill="none" stroke="#262626" stroke-width="2.6"/><path d="M3.5 6 V4.5 Q3.5 1.5 6.5 1.5 Q9.5 1.5 9.5 4.5 V6" fill="none" stroke="#c8c8c8" stroke-width="1.3"/><rect x="1" y="6" width="11" height="6" fill="#c8c8c8"/><rect x="0.5" y="12" width="12" height="1" fill="#222"/></svg>
<svg class="a" style="left:53px;top:389px;" width="8" height="7" viewBox="0 0 8 7"><path d="M0.5 0.5 L7 0.5 L3.75 6.5 Z" fill="#9a9a9a"/></svg>
<svg class="a" style="left:65px;top:385px;" width="13" height="13" viewBox="0 0 13 13"><path d="M2 8 Q1 4 4 3 L5 1 L6.5 3 L8.5 2 L8.5 4 L10 5" fill="none" stroke="#c8c8c8" stroke-width="1.5"/><circle cx="7" cy="8" r="1.6" fill="none" stroke="#c8c8c8" stroke-width="1.1"/><circle cx="10" cy="11" r="1.6" fill="none" stroke="#c8c8c8" stroke-width="1.1"/><path d="M8 9 L9 10" stroke="#c8c8c8" stroke-width="1"/></svg>
<div class="t" style="left:81px;top:385px;font-size:11px;color:#fafafa">[UserControl]</div>
<div class="a" style="left:47px;top:402px;width:294px;height:20px;border:1px solid #5b8ee0"></div>
<svg class="a" style="left:69px;top:410px;" width="8" height="7" viewBox="0 0 8 7"><path d="M0.5 0.5 L7 0.5 L3.75 6.5 Z" fill="#9a9a9a"/></svg>
<svg class="a" style="left:80px;top:407px;" width="13" height="12" viewBox="0 0 13 12"><rect x="0.5" y="2" width="2" height="10" fill="#9a9a9a"/><rect x="3" y="0" width="10" height="2" fill="#9a9a9a"/><rect x="3" y="3" width="10" height="9" fill="#262626"/><rect x="4" y="4" width="3.5" height="3" fill="#d0d0d0"/><rect x="8.5" y="4" width="3.5" height="3" fill="#d0d0d0"/><rect x="4" y="8" width="3.5" height="3" fill="#d0d0d0"/><rect x="8.5" y="8" width="3.5" height="3" fill="#d0d0d0"/></svg>
<div class="t" style="left:97px;top:406px;font-size:11px;color:#fafafa">LayoutRoot</div>
<svg class="a" style="left:306px;top:406px;" width="16" height="13" viewBox="0 0 16 13"><path d="M1.5 4.5 Q8 -1.5 14.5 4.5" fill="none" stroke="#262626" stroke-width="2.2"/><path d="M2 4.2 Q8 -0.8 14 4.2" fill="none" stroke="#c0c0c0" stroke-width="1"/><ellipse cx="8" cy="7.7" rx="5" ry="3.8" fill="none" stroke="#262626" stroke-width="2.6"/><ellipse cx="8" cy="7.7" rx="4.3" ry="3.1" fill="none" stroke="#d0d0d0" stroke-width="1.3"/><rect x="6.6" y="5.2" width="3" height="3" fill="#d0d0d0"/></svg>
<div class="a" style="left:329px;top:411px;width:7px;height:7px;border:1.3px solid #1c1c1c;border-radius:50%"></div>
<svg class="a" style="left:84px;top:431px;" width="8" height="7" viewBox="0 0 8 7"><path d="M0.5 0.5 L7 0.5 L3.75 6.5 Z" fill="#9a9a9a"/></svg>
<svg class="a" style="left:97px;top:428px;" width="13" height="12" viewBox="0 0 13 12"><rect x="0.5" y="0.5" width="9" height="7" fill="#c8c8c8" stroke="#262626" stroke-width="1"/><rect x="2" y="2" width="6" height="1.2" fill="#262626"/><path d="M6 6 L12 3 L12 11 Z" fill="#9a9a9a" stroke="#262626" stroke-width="0.9"/></svg>
<div class="t" style="left:113px;top:427px;font-size:11px;color:#fafafa">SL_wmv</div>
<svg class="a" style="left:306px;top:427px;" width="16" height="13" viewBox="0 0 16 13"><path d="M1.5 4.5 Q8 -1.5 14.5 4.5" fill="none" stroke="#262626" stroke-width="2.2"/><path d="M2 4.2 Q8 -0.8 14 4.2" fill="none" stroke="#c0c0c0" stroke-width="1"/><ellipse cx="8" cy="7.7" rx="5" ry="3.8" fill="none" stroke="#262626" stroke-width="2.6"/><ellipse cx="8" cy="7.7" rx="4.3" ry="3.1" fill="none" stroke="#d0d0d0" stroke-width="1.3"/><rect x="6.6" y="5.2" width="3" height="3" fill="#d0d0d0"/></svg>
<div class="a" style="left:329px;top:432px;width:7px;height:7px;border:1.3px solid #1c1c1c;border-radius:50%"></div>
<svg class="a" style="left:113px;top:448px;" width="14" height="14" viewBox="0 0 14 14"><defs><clipPath id="hg"><rect x="0" y="0" width="7.2" height="14"/></clipPath></defs><g clip-path="url(#hg)"><g fill="#1e1e1e" stroke="#1e1e1e" stroke-width="1.6"><circle cx="7" cy="7" r="3.9"/><rect x="10.20" y="5.60" width="2.8" height="2.8" transform="rotate(0 11.60 7.00)"/><rect x="8.85" y="8.85" width="2.8" height="2.8" transform="rotate(45 10.25 10.25)"/><rect x="5.60" y="10.20" width="2.8" height="2.8" transform="rotate(90 7.00 11.60)"/><rect x="2.35" y="8.85" width="2.8" height="2.8" transform="rotate(135 3.75 10.25)"/><rect x="1.00" y="5.60" width="2.8" height="2.8" transform="rotate(180 2.40 7.00)"/><rect x="2.35" y="2.35" width="2.8" height="2.8" transform="rotate(225 3.75 3.75)"/><rect x="5.60" y="1.00" width="2.8" height="2.8" transform="rotate(270 7.00 2.40)"/><rect x="8.85" y="2.35" width="2.8" height="2.8" transform="rotate(315 10.25 3.75)"/></g><g fill="#c8c8c8"><circle cx="7" cy="7" r="3.9"/><rect x="10.20" y="5.60" width="2.8" height="2.8" transform="rotate(0 11.60 7.00)"/><rect x="8.85" y="8.85" width="2.8" height="2.8" transform="rotate(45 10.25 10.25)"/><rect x="5.60" y="10.20" width="2.8" height="2.8" transform="rotate(90 7.00 11.60)"/><rect x="2.35" y="8.85" width="2.8" height="2.8" transform="rotate(135 3.75 10.25)"/><rect x="1.00" y="5.60" width="2.8" height="2.8" transform="rotate(180 2.40 7.00)"/><rect x="2.35" y="2.35" width="2.8" height="2.8" transform="rotate(225 3.75 3.75)"/><rect x="5.60" y="1.00" width="2.8" height="2.8" transform="rotate(270 7.00 2.40)"/><rect x="8.85" y="2.35" width="2.8" height="2.8" transform="rotate(315 10.25 3.75)"/></g></g><rect x="6.6" y="1.5" width="1" height="11" fill="#1e1e1e"/><path d="M8.3 3.6 L12.2 7 L8.3 10.4 Z" fill="#e8e8e8" stroke="#1e1e1e" stroke-width="1"/></svg>
<div class="t" style="left:129px;top:448px;font-size:11px;color:#fafafa">[ControlMediaElementAction]</div>
<svg class="a" style="left:113px;top:469px;" width="14" height="14" viewBox="0 0 14 14"><defs><clipPath id="hg"><rect x="0" y="0" width="7.2" height="14"/></clipPath></defs><g clip-path="url(#hg)"><g fill="#1e1e1e" stroke="#1e1e1e" stroke-width="1.6"><circle cx="7" cy="7" r="3.9"/><rect x="10.20" y="5.60" width="2.8" height="2.8" transform="rotate(0 11.60 7.00)"/><rect x="8.85" y="8.85" width="2.8" height="2.8" transform="rotate(45 10.25 10.25)"/><rect x="5.60" y="10.20" width="2.8" height="2.8" transform="rotate(90 7.00 11.60)"/><rect x="2.35" y="8.85" width="2.8" height="2.8" transform="rotate(135 3.75 10.25)"/><rect x="1.00" y="5.60" width="2.8" height="2.8" transform="rotate(180 2.40 7.00)"/><rect x="2.35" y="2.35" width="2.8" height="2.8" transform="rotate(225 3.75 3.75)"/><rect x="5.60" y="1.00" width="2.8" height="2.8" transform="rotate(270 7.00 2.40)"/><rect x="8.85" y="2.35" width="2.8" height="2.8" transform="rotate(315 10.25 3.75)"/></g><g fill="#c8c8c8"><circle cx="7" cy="7" r="3.9"/><rect x="10.20" y="5.60" width="2.8" height="2.8" transform="rotate(0 11.60 7.00)"/><rect x="8.85" y="8.85" width="2.8" height="2.8" transform="rotate(45 10.25 10.25)"/><rect x="5.60" y="10.20" width="2.8" height="2.8" transform="rotate(90 7.00 11.60)"/><rect x="2.35" y="8.85" width="2.8" height="2.8" transform="rotate(135 3.75 10.25)"/><rect x="1.00" y="5.60" width="2.8" height="2.8" transform="rotate(180 2.40 7.00)"/><rect x="2.35" y="2.35" width="2.8" height="2.8" transform="rotate(225 3.75 3.75)"/><rect x="5.60" y="1.00" width="2.8" height="2.8" transform="rotate(270 7.00 2.40)"/><rect x="8.85" y="2.35" width="2.8" height="2.8" transform="rotate(315 10.25 3.75)"/></g></g><rect x="6.6" y="1.5" width="1" height="11" fill="#1e1e1e"/><path d="M8.3 3.6 L12.2 7 L8.3 10.4 Z" fill="#e8e8e8" stroke="#1e1e1e" stroke-width="1"/></svg>
<div class="t" style="left:129px;top:469px;font-size:11px;color:#fafafa">[ControlMediaElementAction]</div>
<div class="a" style="left:47px;top:486px;width:293px;height:20px;background:#c4c4c4"></div>
<svg class="a" style="left:112px;top:489px;" width="14" height="14" viewBox="0 0 14 14"><g fill="#3a3a3a" stroke="#3a3a3a" stroke-width="1.8"><circle cx="7" cy="7" r="3.9"/><rect x="10.20" y="5.60" width="2.8" height="2.8" transform="rotate(0 11.60 7.00)"/><rect x="8.85" y="8.85" width="2.8" height="2.8" transform="rotate(45 10.25 10.25)"/><rect x="5.60" y="10.20" width="2.8" height="2.8" transform="rotate(90 7.00 11.60)"/><rect x="2.35" y="8.85" width="2.8" height="2.8" transform="rotate(135 3.75 10.25)"/><rect x="1.00" y="5.60" width="2.8" height="2.8" transform="rotate(180 2.40 7.00)"/><rect x="2.35" y="2.35" width="2.8" height="2.8" transform="rotate(225 3.75 3.75)"/><rect x="5.60" y="1.00" width="2.8" height="2.8" transform="rotate(270 7.00 2.40)"/><rect x="8.85" y="2.35" width="2.8" height="2.8" transform="rotate(315 10.25 3.75)"/></g><g fill="#c4c4c4"><circle cx="7" cy="7" r="3.9"/><rect x="10.20" y="5.60" width="2.8" height="2.8" transform="rotate(0 11.60 7.00)"/><rect x="8.85" y="8.85" width="2.8" height="2.8" transform="rotate(45 10.25 10.25)"/><rect x="5.60" y="10.20" width="2.8" height="2.8" transform="rotate(90 7.00 11.60)"/><rect x="2.35" y="8.85" width="2.8" height="2.8" transform="rotate(135 3.75 10.25)"/><rect x="1.00" y="5.60" width="2.8" height="2.8" transform="rotate(180 2.40 7.00)"/><rect x="2.35" y="2.35" width="2.8" height="2.8" transform="rotate(225 3.75 3.75)"/><rect x="5.60" y="1.00" width="2.8" height="2.8" transform="rotate(270 7.00 2.40)"/><rect x="8.85" y="2.35" width="2.8" height="2.8" transform="rotate(315 10.25 3.75)"/></g><rect x="6.6" y="2" width="1" height="10" fill="#3a3a3a"/><path d="M8.3 4 L11.5 7 L8.3 10" fill="none" stroke="#3a3a3a" stroke-width="1"/></svg>
<div class="t" style="left:129px;top:490px;font-size:11px;color:#505050">[ControlMediaElementAction]</div>
<svg class="a" style="left:97px;top:512px;" width="14" height="12" viewBox="0 0 14 12"><rect x="0.5" y="0.5" width="10" height="6" fill="#c8c8c8" stroke="#262626" stroke-width="1"/><path d="M5 3 L5 11 L7 9.5 L8.5 12 L10 11.3 L8.8 8.8 L11.5 8.5 Z" fill="#c8c8c8" stroke="#262626" stroke-width="0.9"/></svg>
<div class="t" style="left:113px;top:511px;font-size:11px;color:#fafafa">buttonPlay</div>
<svg class="a" style="left:306px;top:511px;" width="16" height="13" viewBox="0 0 16 13"><path d="M1.5 4.5 Q8 -1.5 14.5 4.5" fill="none" stroke="#262626" stroke-width="2.2"/><path d="M2 4.2 Q8 -0.8 14 4.2" fill="none" stroke="#c0c0c0" stroke-width="1"/><ellipse cx="8" cy="7.7" rx="5" ry="3.8" fill="none" stroke="#262626" stroke-width="2.6"/><ellipse cx="8" cy="7.7" rx="4.3" ry="3.1" fill="none" stroke="#d0d0d0" stroke-width="1.3"/><rect x="6.6" y="5.2" width="3" height="3" fill="#d0d0d0"/></svg>
<div class="a" style="left:329px;top:515px;width:7px;height:7px;border:1.3px solid #1c1c1c;border-radius:50%"></div>
<svg class="a" style="left:97px;top:533px;" width="14" height="12" viewBox="0 0 14 12"><rect x="0.5" y="0.5" width="10" height="6" fill="#c8c8c8" stroke="#262626" stroke-width="1"/><path d="M5 3 L5 11 L7 9.5 L8.5 12 L10 11.3 L8.8 8.8 L11.5 8.5 Z" fill="#c8c8c8" stroke="#262626" stroke-width="0.9"/></svg>
<div class="t" style="left:113px;top:532px;font-size:11px;color:#fafafa">buttonPause</div>
<svg class="a" style="left:306px;top:532px;" width="16" height="13" viewBox="0 0 16 13"><path d="M1.5 4.5 Q8 -1.5 14.5 4.5" fill="none" stroke="#262626" stroke-width="2.2"/><path d="M2 4.2 Q8 -0.8 14 4.2" fill="none" stroke="#c0c0c0" stroke-width="1"/><ellipse cx="8" cy="7.7" rx="5" ry="3.8" fill="none" stroke="#262626" stroke-width="2.6"/><ellipse cx="8" cy="7.7" rx="4.3" ry="3.1" fill="none" stroke="#d0d0d0" stroke-width="1.3"/><rect x="6.6" y="5.2" width="3" height="3" fill="#d0d0d0"/></svg>
<div class="a" style="left:329px;top:536px;width:7px;height:7px;border:1.3px solid #1c1c1c;border-radius:50%"></div>
<div class="a" style="left:344px;top:54px;width:106px;height:20px;background:#4b4b4b;border-radius:4px 4px 0 0"></div>
<div class="t" style="left:352px;top:57px;font-size:11px;color:#fafafa">MainPage.xaml*</div>
<svg class="a" style="left:436px;top:60px;" width="8" height="8" viewBox="0 0 8 8"><path d="M1 1 L7 7 M7 1 L1 7" stroke="#b4b4b4" stroke-width="1.3"/></svg>
<div class="a" style="left:452px;top:54px;width:149px;height:20px;background:#363636;border-radius:4px 4px 0 0"></div>
<div class="t" style="left:460px;top:57px;font-size:11px;color:#fafafa">ControlMedia...entAction.cs</div>
<svg class="a" style="left:716px;top:58px;" width="9" height="7" viewBox="0 0 9 7"><path d="M0.5 0.5 L4.5 6.5 L8.5 0.5 Z" fill="#8a8a8a"/></svg>
<div class="a" style="left:344px;top:74px;width:369px;height:24px;background:#2a2a2a"></div>
<div class="a" style="left:350px;top:78px;width:92px;height:18px;background:#333;border:1px solid #262626;border-radius:4px"></div>
<div class="t" style="left:359px;top:80px;font-size:11px;color:#a8a8a8">None selected</div>
<div class="a" style="left:345px;top:98px;width:367px;height:358px;background-color:#fff;background-image:linear-gradient(90deg,#a6a6a6 1px,transparent 1px),linear-gradient(180deg,#b0b0b0 1px,transparent 1px),linear-gradient(90deg,#e9e9e9 1px,transparent 1px),linear-gradient(180deg,#eeeeee 1px,transparent 1px);background-size:40px 40px,40px 40px,8px 8px,8px 8px;background-position:37px 0,0 19px,5px 0,0 3px"></div>
<div class="a" style="left:344px;top:98px;width:1px;height:358px;background:#2a2a2a"></div>
<svg class="a" style="left:345px;top:98px;" width="368" height="358" viewBox="0 0 368 358"><defs>
<radialGradient id="sg1" cx="0.42" cy="0.45" r="0.62">
<stop offset="0" stop-color="#d4effb"/>
<stop offset="0.35" stop-color="#a4dbf5"/>
<stop offset="0.7" stop-color="#7cc6f0"/>
<stop offset="0.92" stop-color="#56a8ea"/>
<stop offset="1" stop-color="#4a9ee8"/>
</radialGradient>
<radialGradient id="sg2" cx="1.0" cy="0.4" r="0.6" gradientTransform="translate(0.5 0.4) scale(1 1.4) translate(-0.5 -0.4)">
<stop offset="0" stop-color="#1468dc" stop-opacity="0.95"/>
<stop offset="0.4" stop-color="#2a82e4" stop-opacity="0.7"/>
<stop offset="1" stop-color="#4aa0ea" stop-opacity="0"/>
</radialGradient>
<linearGradient id="sg4" x1="0" y1="0" x2="0" y2="1">
<stop offset="0" stop-color="#2a7ee0" stop-opacity="0.75"/>
<stop offset="0.08" stop-color="#3a90e6" stop-opacity="0.4"/>
<stop offset="0.22" stop-color="#6ab8ee" stop-opacity="0"/>
</linearGradient>
<linearGradient id="sg5" x1="0" y1="0" x2="1" y2="0">
<stop offset="0" stop-color="#ffffff" stop-opacity="0.55"/>
<stop offset="0.12" stop-color="#ffffff" stop-opacity="0.2"/>
<stop offset="0.3" stop-color="#ffffff" stop-opacity="0"/>
</linearGradient>
<radialGradient id="sg3" cx="0.5" cy="0.5" r="0.5">
<stop offset="0" stop-color="#ffffff" stop-opacity="1"/>
<stop offset="0.5" stop-color="#ffffff" stop-opacity="0.85"/>
<stop offset="1" stop-color="#ffffff" stop-opacity="0"/>
</radialGradient>
<clipPath id="sc"><ellipse cx="92" cy="159" rx="76" ry="92"/></clipPath>
<filter id="bl1" x="-20%" y="-20%" width="140%" height="140%"><feGaussianBlur stdDeviation="1.1"/></filter>
<filter id="bl2" x="-50%" y="-50%" width="200%" height="200%"><feGaussianBlur stdDeviation="5"/></filter>
<filter id="bl3" x="-20%" y="-20%" width="140%" height="140%"><feGaussianBlur stdDeviation="0.6"/></filter>
</defs>
<g filter="url(#bl1)" opacity="0.93">
<ellipse cx="92" cy="159" rx="76" ry="92" fill="url(#sg1)"/>
<g clip-path="url(#sc)">
<ellipse cx="92" cy="159" rx="76" ry="92" fill="url(#sg2)"/>
<ellipse cx="92" cy="159" rx="76" ry="92" fill="url(#sg4)"/>
<ellipse cx="92" cy="159" rx="76" ry="92" fill="url(#sg5)"/>
<ellipse cx="76" cy="118" rx="30" ry="44" fill="url(#sg3)" filter="url(#bl2)" transform="rotate(-28 76 118)"/>
</g>
<path d="M36 96 Q56 69 92 67 Q136 68 160 108" fill="none" stroke="#1e62c8" stroke-opacity="0.8" stroke-width="2.4"/>
<path d="M156 100 Q170 132 168 172 Q163 212 140 234" fill="none" stroke="#1262d8" stroke-opacity="0.45" stroke-width="3"/>
</g>
<path d="M100 172 Q120 132 143 124 Q158 122 162 150 Q164 175 156 200" fill="none" stroke="#2a5fc8" stroke-opacity="0.6" stroke-width="1.3" filter="url(#bl3)"/>
<path d="M40 214 Q72 256 120 247 Q155 238 166 196" fill="none" stroke="#ffffff" stroke-opacity="0.35" stroke-width="2.5" filter="url(#bl1)"/>
</svg>
<div class="a" style="left:358px;top:158px;width:160px;height:198px;clip-path:ellipse(77px 93px at 79px 99px);background-image:linear-gradient(90deg,rgba(100,100,100,0.55) 1px,transparent 1px),linear-gradient(180deg,rgba(100,100,100,0.5) 1px,transparent 1px),linear-gradient(90deg,rgba(150,160,170,0.3) 1px,transparent 1px),linear-gradient(180deg,rgba(150,160,170,0.25) 1px,transparent 1px);background-size:40px 40px,40px 40px,8px 8px,8px 8px;background-position:24px 0,0 39px,0 0,0 7px"></div>
<div class="a" style="left:358px;top:157px;width:160px;height:1px;background:#6a6a6a"></div>
<div class="a" style="left:358px;top:356px;width:160px;height:1px;background:#222"></div>
<div class="a" style="left:542px;top:157px;width:160px;height:40px;border:1px solid #707c88;border-radius:3px;background:linear-gradient(180deg,rgba(253,253,253,0.72) 0%,rgba(244,245,247,0.7) 45%,rgba(224,227,231,0.7) 62%,rgba(206,211,217,0.75) 100%)"></div>
<div class="a" style="left:542px;top:213px;width:160px;height:40px;border:1px solid #707c88;border-radius:3px;background:linear-gradient(180deg,rgba(253,253,253,0.72) 0%,rgba(244,245,247,0.7) 45%,rgba(224,227,231,0.7) 62%,rgba(206,211,217,0.75) 100%)"></div>
<div class="t" style="left:542px;top:170px;width:160px;text-align:center;font-size:11px;color:#111;-webkit-text-stroke:0">Play</div>
<div class="t" style="left:542px;top:226px;width:160px;text-align:center;font-size:11px;color:#111;-webkit-text-stroke:0">Pause</div>
<div class="a" style="left:713px;top:74px;width:17px;height:383px;background:#3c3c3c"></div>
<svg class="a" style="left:716px;top:78px;" width="12" height="11" viewBox="0 0 12 11"><circle cx="4" cy="4" r="3.5" fill="#c8c8c8"/><rect x="4.5" y="4.5" width="6" height="6" fill="#c8c8c8" stroke="#383838" stroke-width="1"/></svg>
<svg class="a" style="left:715px;top:99px;" width="13" height="10" viewBox="0 0 13 10"><path d="M4.5 1 L1.2 5 L4.5 9 M8.5 1 L11.8 5 L8.5 9" fill="none" stroke="#262626" stroke-width="2.6"/><path d="M4.5 1 L1.2 5 L4.5 9 M8.5 1 L11.8 5 L8.5 9" fill="none" stroke="#d0d0d0" stroke-width="1.3"/></svg>
<div class="a" style="left:713px;top:113px;width:17px;height:17px;background:#9a9a9a;border-radius:2px"></div>
<svg class="a" style="left:713px;top:117px;" width="17" height="11" viewBox="0 0 17 11"><path d="M3 1.5 V9.5 M14 1.5 V9.5 M3 5.5 H14" stroke="#1c1c1c" stroke-width="3"/><path d="M3 2 V9 M14 2 V9" stroke="#f4f4f4" stroke-width="1.3"/><path d="M4 5.5 H13" stroke="#f4f4f4" stroke-width="1" stroke-dasharray="1.5 1.2"/></svg>
<svg class="a" style="left:717px;top:136px;" width="9" height="7" viewBox="0 0 9 7"><path d="M0.5 6.5 L4.5 0.5 L8.5 6.5 Z" fill="#808080"/></svg>
<div class="a" style="left:717px;top:207px;width:7px;height:173px;background:#777;border-radius:4px"></div>
<svg class="a" style="left:717px;top:445px;" width="9" height="7" viewBox="0 0 9 7"><path d="M0.5 0.5 L4.5 6.5 L8.5 0.5 Z" fill="#808080"/></svg>
<div class="a" style="left:344px;top:456px;width:386px;height:21px;background:#3a3a3a"></div>
<div class="a" style="left:346px;top:458px;width:57px;height:16px;background:#2e2e2e;border-radius:6px"></div>
<div class="a" style="left:346px;top:458px;width:27px;height:16px;background:#444;border-radius:8px 0 0 8px"></div>
<div class="t" style="left:351px;top:459px;font-size:11px;color:#f0f0f0">100%</div>
<div class="a" style="left:405px;top:458px;width:14px;height:16px;background:#777;border-radius:2px"></div>
<svg class="a" style="left:407px;top:462px;" width="10" height="7" viewBox="0 0 10 7"><path d="M1 1 L5 5 L9 1" fill="none" stroke="#f0f0f0" stroke-width="1.6"/></svg>
<div class="a" style="left:424px;top:457px;width:22px;height:18px;background:#c8c8c8;border-radius:1px"></div>
<div class="a" style="left:448px;top:457px;width:22px;height:18px;background:#c8c8c8;border-radius:1px"></div>
<div class="a" style="left:470px;top:457px;width:22px;height:18px;background:#c8c8c8;border-radius:1px"></div>
<div class="a" style="left:493px;top:457px;width:22px;height:18px;background:#c8c8c8;border-radius:1px"></div>
<div class="t" style="left:426px;top:459px;width:18px;text-align:center;font-family:'Liberation Serif',serif;font-style:italic;font-weight:bold;font-size:13px;color:#1c1c1c">fx</div>
<svg class="a" style="left:450px;top:460px;" width="18" height="12" viewBox="0 0 18 12"><rect x="0.5" y="0.5" width="17" height="11" fill="#d0d8e6" stroke="#4a6ab0" stroke-width="1"/><path d="M2.5 2.5 h3.5 v3 h-3.5z M7.5 2.5 h3.5 v3 h-3.5z M12.5 2.5 h3.5 v3 h-3.5z M2.5 7 h3.5 v3 h-3.5z M7.5 7 h3.5 v3 h-3.5z M12.5 7 h3.5 v3 h-3.5z" fill="#e8eef8" stroke="#1c1c2a" stroke-width="0.9"/></svg>
<svg class="a" style="left:472px;top:460px;" width="18" height="12" viewBox="0 0 18 12"><rect x="0.5" y="0.5" width="17" height="11" fill="#d0d8e6" stroke="#4a6ab0" stroke-width="1"/><path d="M2.5 2.5 h3.5 v3 h-3.5z M2.5 7 h3.5 v3 h-3.5z M12.5 2.5 h3.5 v3 h-3.5z M12.5 7 h3.5 v3 h-3.5z M7 2.5 h4 v7.5 h-4z" fill="#e8eef8" stroke="#1c1c2a" stroke-width="0.9"/><circle cx="9.2" cy="6.2" r="2.8" fill="#5ac82a" stroke="#1c2a10" stroke-width="0.8"/></svg>
<svg class="a" style="left:495px;top:460px;" width="18" height="12" viewBox="0 0 18 12"><path d="M1 6 H17 M9 1 V11" stroke="#262626" stroke-width="1.6"/><circle cx="9" cy="6" r="3.2" fill="#6ad02a" stroke="#1c3a10" stroke-width="0.9"/></svg>
<div class="a" style="left:517px;top:457px;width:21px;height:18px;background:#474747;border-radius:2px"></div>
<svg class="a" style="left:520px;top:460px;" width="15" height="12" viewBox="0 0 15 12"><path d="M1.5 1.5 H13.5 V8 H6 L3 11 V8 H1.5 Z" fill="#bcbcbc" stroke="#222" stroke-width="1"/></svg>
<div class="a" style="left:541px;top:457px;width:172px;height:17px;background:#3c3c3c"></div>
<div class="a" style="left:713px;top:457px;width:17px;height:17px;background:#3c3c3c;border-radius:0 0 3px 0"></div>
<svg class="a" style="left:550px;top:462px;" width="7" height="8" viewBox="0 0 7 8"><path d="M6.5 0.5 L0.5 4 L6.5 7.5 Z" fill="#808080"/></svg>
<svg class="a" style="left:702px;top:462px;" width="7" height="8" viewBox="0 0 7 8"><path d="M0.5 0.5 L6.5 4 L0.5 7.5 Z" fill="#808080"/></svg>
<div class="a" style="left:593px;top:462px;width:66px;height:8px;background:#777;border-radius:4px"></div>
<div class="a" style="left:344px;top:477px;width:369px;height:268px;background:#fff"></div>
<div class="a" style="left:383px;top:477px;width:1px;height:268px;background:#d0d0d0"></div>
<div class="a" style="left:384px;top:477px;width:329px;height:268px;overflow:hidden">
<div class="a" style="left:135px;top:197px;width:260px;height:19px;background:#d4d4d4;border:1px solid #a0a0a0"></div>
<div class="code" style="left:11.300000000000011px;top:1px"><b>&lt;</b><i>Grid</i> <u>x:Name</u>="<s>LayoutRoot</s>" <u>Background</u>="<s>White</s>"</div>
<div class="code" style="left:11.300000000000011px;top:19px">    <b>&lt;</b><i>MediaElement</i> <u>x:Name</u>="<s>SL_wmv</s>" <u>Height</u>="<s>200</s>"</div>
<div class="code" style="left:11.300000000000011px;top:37px">                  <u>Width</u>="<s>160</s>" <u>Source</u>="<s>/SL.wmv</s>"</div>
<div class="code" style="left:11.300000000000011px;top:55px">        <b>&lt;</b><i>i:Interaction.Triggers</i><b>&gt;</b></div>
<div class="code" style="left:11.300000000000011px;top:73px">            <b>&lt;</b><i>i:EventTrigger</i> <u>SourceName</u>="<s>buttonPlay</s>"</div>
<div class="code" style="left:11.300000000000011px;top:91px">                <b>&lt;</b><i>local:ControlMediaElementAction</i></div>
<div class="code" style="left:11.300000000000011px;top:109px">            <b>&lt;/</b><i>i:EventTrigger</i><b>&gt;</b></div>
<div class="code" style="left:11.300000000000011px;top:127px">            <b>&lt;</b><i>i:EventTrigger</i> <u>SourceName</u>="<s>buttonPause</s>"</div>
<div class="code" style="left:11.300000000000011px;top:145px">                <b>&lt;</b><i>local:ControlMediaElementAction</i></div>
<div class="code" style="left:11.300000000000011px;top:163px">            <b>&lt;/</b><i>i:EventTrigger</i><b>&gt;</b></div>
<div class="code" style="left:11.300000000000011px;top:181px">            <b>&lt;</b><i>i:EventTrigger</i> <u>EventName</u>="<s>MediaEnded</s>"</div>
<div class="code" style="left:11.300000000000011px;top:199px">                <b>&lt;</b><i>local:ControlMediaElementAction</i></div>
<div class="code" style="left:11.300000000000011px;top:217px">            <b>&lt;/</b><i>i:EventTrigger</i><b>&gt;</b></div>
<div class="code" style="left:11.300000000000011px;top:235px">        <b>&lt;/</b><i>i:Interaction.Triggers</i><b>&gt;</b></div>
<div class="code" style="left:11.300000000000011px;top:253px">    <b>&lt;/</b><i>MediaElement</i><b>&gt;</b></div>
</div>
<div class="code" style="left:344px;width:37px;letter-spacing:0;text-align:right;top:478px;color:#2b8fa8">8</div>
<div class="code" style="left:344px;width:37px;letter-spacing:0;text-align:right;top:496px;color:#2b8fa8">9</div>
<div class="code" style="left:344px;width:37px;letter-spacing:0;text-align:right;top:514px;color:#2b8fa8">10</div>
<div class="code" style="left:344px;width:37px;letter-spacing:0;text-align:right;top:532px;color:#2b8fa8">11</div>
<div class="code" style="left:344px;width:37px;letter-spacing:0;text-align:right;top:550px;color:#2b8fa8">12</div>
<div class="code" style="left:344px;width:37px;letter-spacing:0;text-align:right;top:568px;color:#2b8fa8">13</div>
<div class="code" style="left:344px;width:37px;letter-spacing:0;text-align:right;top:586px;color:#2b8fa8">14</div>
<div class="code" style="left:344px;width:37px;letter-spacing:0;text-align:right;top:604px;color:#2b8fa8">15</div>
<div class="code" style="left:344px;width:37px;letter-spacing:0;text-align:right;top:622px;color:#2b8fa8">16</div>
<div class="code" style="left:344px;width:37px;letter-spacing:0;text-align:right;top:640px;color:#2b8fa8">17</div>
<div class="code" style="left:344px;width:37px;letter-spacing:0;text-align:right;top:658px;color:#2b8fa8">18</div>
<div class="code" style="left:344px;width:37px;letter-spacing:0;text-align:right;top:676px;color:#2b8fa8">19</div>
<div class="code" style="left:344px;width:37px;letter-spacing:0;text-align:right;top:694px;color:#2b8fa8">20</div>
<div class="code" style="left:344px;width:37px;letter-spacing:0;text-align:right;top:712px;color:#2b8fa8">21</div>
<div class="code" style="left:344px;width:37px;letter-spacing:0;text-align:right;top:730px;color:#2b8fa8">22</div>
<div class="a" style="left:713px;top:477px;width:17px;height:268px;background:#3c3c3c"></div>
<svg class="a" style="left:717px;top:482px;" width="9" height="7" viewBox="0 0 9 7"><path d="M0.5 6.5 L4.5 0.5 L8.5 6.5 Z" fill="#808080"/></svg>
<div class="a" style="left:718px;top:530px;width:7px;height:102px;background:#777;border-radius:4px"></div>
<svg class="a" style="left:717px;top:733px;" width="9" height="7" viewBox="0 0 9 7"><path d="M0.5 0.5 L4.5 6.5 L8.5 0.5 Z" fill="#808080"/></svg>
<div class="a" style="left:344px;top:745px;width:386px;height:17px;background:#3a3a3a"></div>
<svg class="a" style="left:350px;top:750px;" width="7" height="8" viewBox="0 0 7 8"><path d="M6.5 0.5 L0.5 4 L6.5 7.5 Z" fill="#6a6a6a"/></svg>
<svg class="a" style="left:702px;top:750px;" width="7" height="8" viewBox="0 0 7 8"><path d="M0.5 0.5 L6.5 4 L0.5 7.5 Z" fill="#6a6a6a"/></svg>
<div class="a" style="left:362px;top:749px;width:98px;height:8px;background:#777;border-radius:4px"></div>
<div class="a" style="left:730px;top:477px;width:2px;height:286px;background:#3a3a3a"></div>
<svg class="a" style="left:732px;top:57px;" width="100" height="19" viewBox="0 0 100 19"><path d="M0 19 L0 4 Q0 0 4 0 L56 0 Q60 0 63 3 L78 19 Z" fill="#505050"/></svg>
<div class="t" style="left:740px;top:60px;font-size:11px;color:#fafafa">Properties</div>
<svg class="a" style="left:990px;top:61px;" width="10" height="11" viewBox="0 0 10 11"><rect x="1.5" y="0.5" width="6" height="5" fill="#c8c8c8" stroke="#262626" stroke-width="0.8"/><rect x="0" y="5" width="9" height="2" fill="#c8c8c8" stroke="#262626" stroke-width="0.6"/><rect x="3.8" y="7" width="1.6" height="3.5" fill="#c8c8c8"/></svg>
<svg class="a" style="left:1004px;top:63px;" width="8" height="8" viewBox="0 0 8 8"><path d="M1 1 L7 7 M7 1 L1 7" stroke="#b4b4b4" stroke-width="1.3"/></svg>
<div class="a" style="left:732px;top:75px;width:285px;height:74px;background:#505050;border-radius:0 5px 0 0"></div>
<svg class="a" style="left:736px;top:85px;" width="24" height="24" viewBox="0 0 24 24"><path d="M2 2 H22.5 V16.5 H10.5 L6.5 21.5 L6.5 16.5 H2 Z" fill="#f4f4f4" stroke="#1c1c1c" stroke-width="1.6" stroke-linejoin="round"/><rect x="3" y="3" width="18.5" height="12.5" fill="#c4c4c4"/><g fill="#6a8ed0"><circle cx="8.5" cy="9.5" r="3.1"/><rect x="11.50" y="8.30" width="2.4" height="2.4" transform="rotate(0 12.70 9.50)"/><rect x="10.27" y="11.27" width="2.4" height="2.4" transform="rotate(45 11.47 12.47)"/><rect x="7.30" y="12.50" width="2.4" height="2.4" transform="rotate(90 8.50 13.70)"/><rect x="4.33" y="11.27" width="2.4" height="2.4" transform="rotate(135 5.53 12.47)"/><rect x="3.10" y="8.30" width="2.4" height="2.4" transform="rotate(180 4.30 9.50)"/><rect x="4.33" y="5.33" width="2.4" height="2.4" transform="rotate(225 5.53 6.53)"/><rect x="7.30" y="4.10" width="2.4" height="2.4" transform="rotate(270 8.50 5.30)"/><rect x="10.27" y="5.33" width="2.4" height="2.4" transform="rotate(315 11.47 6.53)"/></g><circle cx="8.5" cy="9.5" r="1.1" fill="#c4c4c4"/><path d="M14.5 5.5 L20 9.5 L14.5 13.5 Z" fill="#6a8ed0"/></svg>
<div class="t" style="left:767px;top:83px;font-size:11px;color:#fafafa">Name</div>
<div class="a" style="left:800px;top:80px;width:155px;height:20px;background:#333;border-radius:4px"></div>
<div class="t" style="left:807px;top:83px;font-size:11px;color:#fafafa">&lt;No Name&gt;</div>
<div class="t" style="left:773px;top:103px;font-size:11px;color:#fafafa">Type</div>
<div class="t" style="left:802px;top:103px;font-size:11px;color:#fafafa">ControlMediaElementAction</div>
<div class="a" style="left:959px;top:80px;width:1px;height:36px;background:#3a3a3a"></div>
<div class="a" style="left:962px;top:80px;width:51px;height:21px;background:#484848;border:1px solid #333;border-radius:1px"></div>
<div class="a" style="left:963px;top:81px;width:24px;height:19px;background:#c8c8c8"></div>
<svg class="a" style="left:962px;top:80px;" width="26" height="21" viewBox="0 0 26 21"><rect x="6.5" y="4" width="13.5" height="9.5" rx="1" fill="#5a80cc" stroke="#1c1c1c" stroke-width="2.6"/><rect x="6.8" y="4.3" width="12.9" height="8.9" fill="none" stroke="#ffffff" stroke-width="1"/><path d="M11.5 10 L8.5 13.5 L11.5 17 M15.5 10 L18.5 13.5 L15.5 17 M13.5 11 V19" fill="none" stroke="#1c1c1c" stroke-width="3.4"/><path d="M11.5 10 L8.5 13.5 L11.5 17 M15.5 10 L18.5 13.5 L15.5 17 M13.5 11 V19" fill="none" stroke="#ffffff" stroke-width="1.4"/></svg>
<svg class="a" style="left:987px;top:80px;" width="26" height="21" viewBox="0 0 26 21"><rect x="6.5" y="4.5" width="11" height="9" fill="#8a8a8a" stroke="#262626" stroke-width="2.2"/><rect x="6.8" y="4.8" width="10.4" height="8.4" fill="none" stroke="#b8b8b8" stroke-width="0.8"/><path d="M16.5 5 L21.5 5 L18.5 9 L21.5 9 L14.5 17.5 L16.5 11.5 L13.5 11.5 Z" fill="#c8c8c8" stroke="#262626" stroke-width="1.2" stroke-linejoin="round"/></svg>
<div class="a" style="left:736px;top:120px;width:277px;height:1px;background:#3a3a3a"></div>
<div class="a" style="left:736px;top:125px;width:277px;height:20px;background:#333;border-radius:4px"></div>
<div class="t" style="left:742px;top:128px;font-size:11px;font-style:italic;color:#9a9a9a">Search</div>
<svg class="a" style="left:997px;top:128px;" width="14" height="14" viewBox="0 0 14 14"><circle cx="8.5" cy="5.5" r="4" fill="none" stroke="#8a8a8a" stroke-width="1.5"/><path d="M5.5 8.5 L1.5 12.5" stroke="#8a8a8a" stroke-width="2" stroke-linecap="round"/></svg>
<div class="a" style="left:732px;top:149px;width:267px;height:614px;background:#333"></div>
<div class="a" style="left:999px;top:149px;width:18px;height:614px;background:#3a3a3a"></div>
<svg class="a" style="left:1004px;top:157px;" width="9" height="7" viewBox="0 0 9 7"><path d="M0.5 6.5 L4.5 0.5 L8.5 6.5 Z" fill="#5a5a5a"/></svg>
<svg class="a" style="left:1004px;top:750px;" width="9" height="7" viewBox="0 0 9 7"><path d="M0.5 0.5 L4.5 6.5 L8.5 0.5 Z" fill="#5a5a5a"/></svg>
<div class="a" style="left:732px;top:151px;width:267px;height:96px;background:#555555;border-radius:5px"></div>
<svg class="a" style="left:741px;top:157px;" width="8" height="7" viewBox="0 0 8 7"><path d="M0.5 0.5 L7 0.5 L3.75 6.5 Z" fill="#a8a8a8"/></svg>
<div class="t" style="left:752px;top:154px;font-size:12px;font-weight:bold;color:#f8f8f8">Trigger</div>
<div class="t" style="right:189px;top:178px;font-size:11px;color:#f0f0f0">TriggerType</div>
<div class="t" style="left:840px;top:178px;font-size:11px;color:#f0f0f0">(EventTrigger)</div>
<div class="a" style="left:933px;top:175px;width:50px;height:19px;border:1px solid #2e2e2e;border-radius:3px;background:#585858"></div>
<div class="t" style="left:933px;top:177px;width:50px;text-align:center;font-size:11px;color:#fafafa">New</div>
<div class="t" style="right:189px;top:202px;font-size:11px;color:#f0f0f0">SourceName</div>
<div class="a" style="left:840px;top:198px;width:114px;height:20px;background:#333;border-radius:4px"></div>
<div class="t" style="left:847px;top:201px;font-size:11px;font-style:italic;color:#9a9a9a">SL_wmv</div>
<svg class="a" style="left:937px;top:201px;" width="14" height="14" viewBox="0 0 14 14"><circle cx="7" cy="7.5" r="6" fill="#222" opacity="0.7"/><circle cx="6.5" cy="6.5" r="5.2" fill="none" stroke="#c8c8c8" stroke-width="1.6"/><circle cx="6.5" cy="6.5" r="2" fill="#c8c8c8"/></svg>
<div class="a" style="left:958px;top:198px;width:25px;height:20px;border:1px solid #2e2e2e;border-radius:3px;background:#585858"></div>
<div class="t" style="left:958px;top:202px;width:25px;text-align:center;font-size:11px;font-weight:bold;color:#fafafa">...</div>
<div class="a" style="left:987px;top:205px;width:6px;height:6px;border:1px solid #3e3e3e"></div>
<div class="t" style="right:189px;top:226px;font-size:11px;color:#f0f0f0">EventName</div>
<div class="a" style="left:840px;top:222px;width:143px;height:20px;background:#333;border-radius:4px"></div>
<div class="t" style="left:846px;top:225px;font-size:11px;color:#fafafa">MediaEnded</div>
<div class="a" style="left:968px;top:223px;width:14px;height:18px;background:#6e6e6e;border-radius:2px"></div>
<svg class="a" style="left:970px;top:229px;" width="10" height="7" viewBox="0 0 10 7"><path d="M1 1 L5 5 L9 1" fill="none" stroke="#f4f4f4" stroke-width="1.6"/></svg>
<div class="a" style="left:987px;top:229px;width:6px;height:6px;background:#f8f8f8"></div>
<div class="a" style="left:732px;top:251px;width:267px;height:36px;background:#555555;border-radius:5px"></div>
<svg class="a" style="left:741px;top:258px;" width="8" height="7" viewBox="0 0 8 7"><path d="M0.5 0.5 L7 0.5 L3.75 6.5 Z" fill="#a8a8a8"/></svg>
<div class="t" style="left:752px;top:255px;font-size:12px;font-weight:bold;color:#f8f8f8">Common Properties</div>
<div class="a" style="left:732px;top:273px;width:267px;height:1px;background:#4a4a4a"></div>
<svg class="a" style="left:860px;top:277px;" width="11" height="8" viewBox="0 0 11 8"><path d="M1 2 L5.5 6.5 L10 2" fill="none" stroke="#d0d0d0" stroke-width="1.6"/><circle cx="5.5" cy="1.5" r="1.2" fill="#d0d0d0"/></svg>
<div class="a" style="left:732px;top:290px;width:267px;height:46px;background:#555555;border-radius:5px"></div>
<svg class="a" style="left:741px;top:297px;" width="8" height="7" viewBox="0 0 8 7"><path d="M0.5 0.5 L7 0.5 L3.75 6.5 Z" fill="#a8a8a8"/></svg>
<div class="t" style="left:752px;top:294px;font-size:12px;font-weight:bold;color:#f8f8f8">Miscellaneous</div>
<div class="t" style="left:738px;top:314px;font-size:11px;color:#f0f0f0">ControlMediaElem...</div>
<div class="a" style="left:840px;top:310px;width:143px;height:20px;background:#333;border-radius:4px"></div>
<div class="t" style="left:846px;top:313px;font-size:11px;color:#fafafa">RewindAndPlay</div>
<div class="a" style="left:968px;top:311px;width:14px;height:18px;background:#6e6e6e;border-radius:2px"></div>
<svg class="a" style="left:970px;top:317px;" width="10" height="7" viewBox="0 0 10 7"><path d="M1 1 L5 5 L9 1" fill="none" stroke="#f4f4f4" stroke-width="1.6"/></svg>
<div class="a" style="left:987px;top:317px;width:6px;height:6px;background:#f8f8f8"></div>
</body></html>
